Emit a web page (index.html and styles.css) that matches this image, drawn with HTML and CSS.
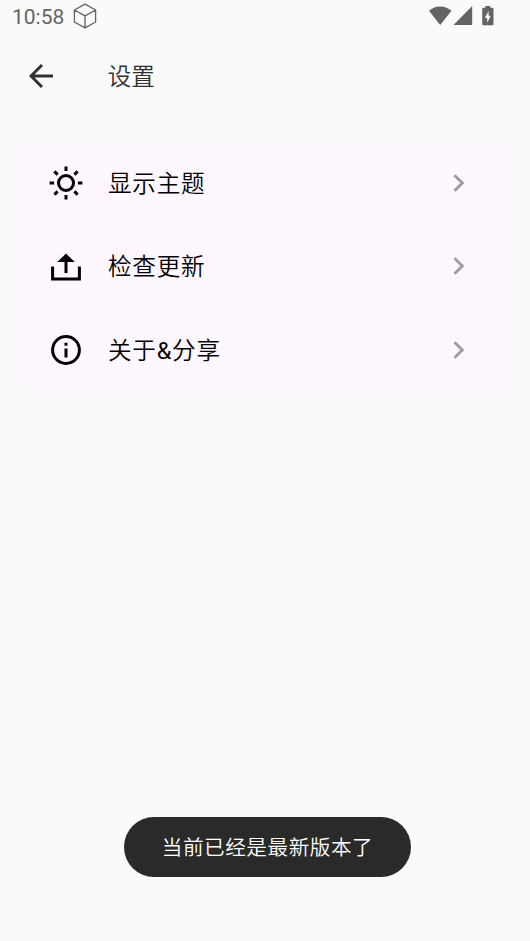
FILE: index.html
```html
<!DOCTYPE html>
<html lang="zh-CN">
<head>
<meta charset="utf-8">
<title>设置</title>
<link rel="stylesheet" href="styles.css">
</head>
<body>
<div class="screen">
  <header class="status">
    <span class="clock">10:58</span>
    <svg class="cube" viewBox="0 0 24 26" fill="none" stroke="#646464" stroke-width="1.35" stroke-linejoin="round"><path d="M12 1.2 22.6 7v12L12 24.8 1.4 19V7zM1.4 7 12 12.8 22.6 7M12 12.8v12"/></svg>
    <svg class="signals" viewBox="0 0 68 20" fill="#646464"><path d="M0 4.8C6.5-.9 16-.9 22.5 4.8L11.2 19zM43.2 0v19H24.5z"/><path fill-rule="evenodd" d="M56.3 0h5v1.7h2.1q1.1 0 1.1 1.1v15.4q0 1.1-1.1 1.1h-9.1q-1.1 0-1.1-1.1V2.8q0-1.1 1.1-1.1h2zM59.6 5l-3.8 6.9h2.4v4.8l3.6-7h-2.2z"/></svg>
  </header>
  <nav class="bar">
    <svg class="back" viewBox="0 0 24 24" fill="none" stroke="#303030" stroke-width="2.9"><path d="M24 12H2M13 1 2 12l11 11"/></svg>
    <h1>设置</h1>
  </nav>
  <main class="card">
    <div class="row">
      <svg class="icon" viewBox="0 0 36 36" fill="none" stroke="#000" stroke-width="3"><circle cx="18" cy="18" r="7.5"/><path d="M18 1.6v4.5M18 29.9v4.5M1.6 18h4.5M29.9 18h4.5M6.4 6.4l3.2 3.2M26.4 26.4l3.2 3.2M6.4 29.6l3.2-3.2M26.4 9.6l3.2-3.2"/></svg>
      <span class="label">显示主题</span>
      <svg class="chevron" viewBox="0 0 12 18"><path d="m1.5 1.3 7.8 7.7-7.8 7.7"/></svg>
    </div>
    <div class="row">
      <svg class="icon" viewBox="0 0 36 36"><path d="M4.6 18.5v12.6h26.8V18.5M18 25V11" fill="none" stroke="#000" stroke-width="3"/><path d="m18 5.6 8.8 8.4H9.2z"/></svg>
      <span class="label">检查更新</span>
      <svg class="chevron" viewBox="0 0 12 18"><path d="m1.5 1.3 7.8 7.7-7.8 7.7"/></svg>
    </div>
    <div class="row">
      <svg class="icon" viewBox="0 0 36 36" fill="none" stroke="#000" stroke-width="3"><circle cx="18" cy="18" r="13.4"/><path d="M18 16.5v9M18 10.7v3"/></svg>
      <span class="label">关于<span class="latin">&amp;</span>分享</span>
      <svg class="chevron" viewBox="0 0 12 18"><path d="m1.5 1.3 7.8 7.7-7.8 7.7"/></svg>
    </div>
  </main>
  <div class="toast">当前已经是最新版本了</div>
</div>
</body>
</html>
```
FILE: styles.css
```css
* { box-sizing: border-box; }
body {
  margin: 0;
  background: #fafafa;
  font-family: Roboto, "Noto Sans CJK SC", sans-serif;
}
svg { display: block; flex: none; }
.screen {
  display: flex;
  flex-direction: column;
  height: 941px;
  overflow: hidden;
}
.status {
  display: flex;
  align-items: center;
  height: 32px;
  padding: 0 33px 0 12px;
}
.clock {
  width: 60.5px;
  padding-top: 2px;
  font-size: 21px;
  font-weight: 450;
  line-height: 32px;
  color: #646464;
}
.cube { width: 24px; height: 26px; }
.signals { width: 68px; height: 20px; margin-left: auto; }
.bar {
  display: flex;
  align-items: center;
  height: 87px;
  padding-left: 29px;
}
.back { width: 24px; height: 24px; }
h1 {
  margin: 0 0 0 54.7px;
  padding-top: 2px;
  font-size: 23.5px;
  font-weight: 350;
  line-height: 36px;
  color: #303030;
}
.card {
  height: 249px;
  margin: 23px 18px 0 22px;
  display: grid;
  grid-template-rows: repeat(3, 83.3px);
  border-radius: 12px;
  background: #fef7ff;
}
.row {
  display: flex;
  align-items: center;
  padding: 0 47px 1.4px 25.5px;
}
.icon { width: 36px; height: 36px; }
.label {
  margin-left: 24.5px;
  padding-top: 2px;
  font-size: 23.6px;
  font-weight: 350;
  line-height: 36px;
  letter-spacing: 0.74px;
  color: #000;
}
.latin { font-weight: 400; }
.chevron {
  width: 12px;
  height: 18px;
  margin-left: auto;
  fill: none;
  stroke: #9f9ba0;
  stroke-width: 2.9;
}
.toast {
  width: 287px;
  height: 60px;
  margin: auto auto 64px 124px;
  border-radius: 30px;
  background: #2a2a2a;
  color: #fff;
  font-size: 20.6px;
  font-weight: 350;
  line-height: 62px;
  letter-spacing: 0.55px;
  text-align: center;
}
```
